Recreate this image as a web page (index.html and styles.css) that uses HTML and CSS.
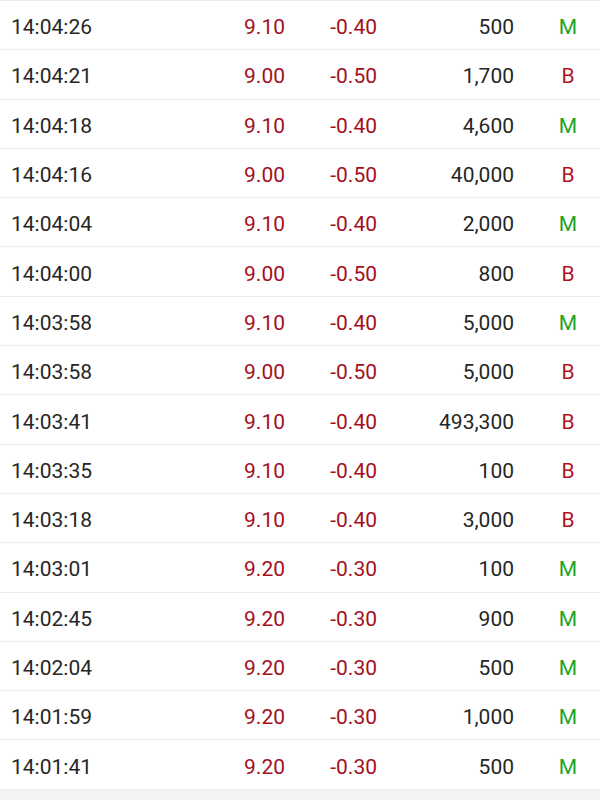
FILE: index.html
```html
<!DOCTYPE html>
<html>
<head>
<meta charset="utf-8">
<link rel="stylesheet" href="styles.css">
</head>
<body>
<div class="list">
  <div class="row"><span class="time">14:04:26</span><span class="price">9.10</span><span class="chg">-0.40</span><span class="vol">500</span><span class="side m">M</span></div>
  <div class="row"><span class="time">14:04:21</span><span class="price">9.00</span><span class="chg">-0.50</span><span class="vol">1,700</span><span class="side b">B</span></div>
  <div class="row"><span class="time">14:04:18</span><span class="price">9.10</span><span class="chg">-0.40</span><span class="vol">4,600</span><span class="side m">M</span></div>
  <div class="row"><span class="time">14:04:16</span><span class="price">9.00</span><span class="chg">-0.50</span><span class="vol">40,000</span><span class="side b">B</span></div>
  <div class="row"><span class="time">14:04:04</span><span class="price">9.10</span><span class="chg">-0.40</span><span class="vol">2,000</span><span class="side m">M</span></div>
  <div class="row"><span class="time">14:04:00</span><span class="price">9.00</span><span class="chg">-0.50</span><span class="vol">800</span><span class="side b">B</span></div>
  <div class="row"><span class="time">14:03:58</span><span class="price">9.10</span><span class="chg">-0.40</span><span class="vol">5,000</span><span class="side m">M</span></div>
  <div class="row"><span class="time">14:03:58</span><span class="price">9.00</span><span class="chg">-0.50</span><span class="vol">5,000</span><span class="side b">B</span></div>
  <div class="row"><span class="time">14:03:41</span><span class="price">9.10</span><span class="chg">-0.40</span><span class="vol">493,300</span><span class="side b">B</span></div>
  <div class="row"><span class="time">14:03:35</span><span class="price">9.10</span><span class="chg">-0.40</span><span class="vol">100</span><span class="side b">B</span></div>
  <div class="row"><span class="time">14:03:18</span><span class="price">9.10</span><span class="chg">-0.40</span><span class="vol">3,000</span><span class="side b">B</span></div>
  <div class="row"><span class="time">14:03:01</span><span class="price">9.20</span><span class="chg">-0.30</span><span class="vol">100</span><span class="side m">M</span></div>
  <div class="row"><span class="time">14:02:45</span><span class="price">9.20</span><span class="chg">-0.30</span><span class="vol">900</span><span class="side m">M</span></div>
  <div class="row"><span class="time">14:02:04</span><span class="price">9.20</span><span class="chg">-0.30</span><span class="vol">500</span><span class="side m">M</span></div>
  <div class="row"><span class="time">14:01:59</span><span class="price">9.20</span><span class="chg">-0.30</span><span class="vol">1,000</span><span class="side m">M</span></div>
  <div class="row"><span class="time">14:01:41</span><span class="price">9.20</span><span class="chg">-0.30</span><span class="vol">500</span><span class="side m">M</span></div>
</div>
</body>
</html>
```
FILE: styles.css
```css
html, body {
  margin: 0;
  padding: 0;
}
body {
  background: #f3f3f3;
  font-family: Roboto, "Noto Sans", "Liberation Sans", sans-serif;
  font-size: 21px;
  color: #262626;
  width: 600px;
  height: 800px;
  overflow: hidden;
}
.list {
  background: #ffffff;
  border-top: 1px solid #ececec;
}
.row {
  display: grid;
  grid-template-columns: 201px 84px 92px 137px 86px;
  align-items: center;
  height: 49.3px;
  box-sizing: border-box;
  padding-top: 4px;
  border-bottom: 1px solid #ececec;
}
.time {
  padding-left: 11px;
}
.price, .chg {
  text-align: right;
  color: #a3101c;
}
.vol {
  text-align: right;
}
.side {
  text-align: center;
  padding-left: 22px;
}
.m { color: #1ca424; }
.b { color: #b0141e; }
```
